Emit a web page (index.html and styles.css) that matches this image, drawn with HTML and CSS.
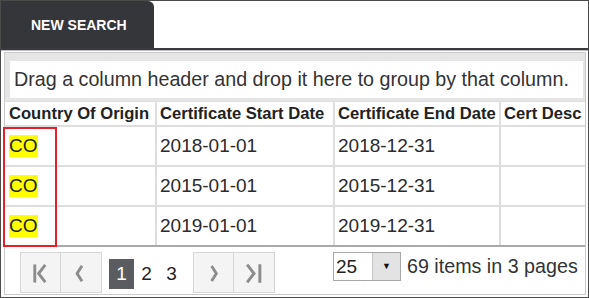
FILE: index.html
```html
<!DOCTYPE html>
<html lang="en">
<head>
    <meta charset="UTF-8">
    <title>Certificates</title>
    <link rel="stylesheet" href="styles.css">
</head>
<body>
    <div class="frame">
        <!-- Tab strip -->
        <div class="tabs">
            <div class="tab">NEW SEARCH</div>
        </div>
        <div class="tab-line"></div>

        <div class="content">
            <div class="grid">
                <div class="group-panel">
                    <div class="group-box">Drag a column header and drop it here to group by that column.</div>
                </div>

                <div class="row head">
                    <div class="cell first">Country Of Origin</div>
                    <div class="cell">Certificate Start Date</div>
                    <div class="cell">Certificate End Date</div>
                    <div class="cell last">Cert Desc</div>
                </div>
                <div class="row">
                    <div class="cell first"><span class="mark">CO</span></div>
                    <div class="cell">2018-01-01</div>
                    <div class="cell">2018-12-31</div>
                    <div class="cell last"></div>
                </div>
                <div class="row">
                    <div class="cell first"><span class="mark">CO</span></div>
                    <div class="cell">2015-01-01</div>
                    <div class="cell">2015-12-31</div>
                    <div class="cell last"></div>
                </div>
                <div class="row end">
                    <div class="cell first"><span class="mark">CO</span></div>
                    <div class="cell">2019-01-01</div>
                    <div class="cell">2019-12-31</div>
                    <div class="cell last"></div>
                </div>

                <!-- Pager -->
                <div class="pager">
                    <div class="nav-btns">
                        <button class="pg-btn">
                            <svg width="41" height="41" viewBox="0 0 41 41"><rect x="13" y="11" width="3" height="19" fill="#8c8c8c"/><polyline points="25.5,11.5 18.5,20.5 25.5,29.5" fill="none" stroke="#8c8c8c" stroke-width="3"/></svg>
                        </button>
                        <button class="pg-btn">
                            <svg width="41" height="41" viewBox="0 0 41 41"><polyline points="21.5,12.5 16.5,20.5 21.5,28.5" fill="none" stroke="#8c8c8c" stroke-width="3"/></svg>
                        </button>
                    </div>
                    <div class="pages">
                        <span class="page current">1</span>
                        <span class="page">2</span>
                        <span class="page">3</span>
                    </div>
                    <div class="nav-btns">
                        <button class="pg-btn">
                            <svg width="41" height="41" viewBox="0 0 41 41"><polyline points="18.5,12.5 23.5,20.5 18.5,28.5" fill="none" stroke="#8c8c8c" stroke-width="3"/></svg>
                        </button>
                        <button class="pg-btn">
                            <svg width="41" height="41" viewBox="0 0 41 41"><polyline points="13.5,11.5 20.5,20.5 13.5,29.5" fill="none" stroke="#8c8c8c" stroke-width="3"/><rect x="25" y="11" width="3" height="19" fill="#8c8c8c"/></svg>
                        </button>
                    </div>
                    <div class="size-select">
                        <span class="size-value">25</span>
                        <span class="size-arrow">&#9660;</span>
                    </div>
                    <span class="info">69 items in 3 pages</span>
                </div>
            </div>

            <!-- red highlight around the first column -->
            <div class="annot"></div>
        </div>
    </div>
</body>
</html>
```

FILE: styles.css
```css
/* Page */
body {
    margin: 0;
    background: #fff;
    font-family: "Liberation Sans", Arial, sans-serif;
    color: #333;
}

.frame {
    position: relative;
    width: 589px;
    height: 298px;
    border: 1px solid #4b4b4b;
    box-sizing: border-box;
    overflow: hidden;
}

/* Tabs */
.tabs {
    display: flex;
    height: 47px;
}

.tab {
    width: 153px;
    background-color: #35363a;
    border-top-right-radius: 6px;
    color: #fff;
    font-weight: bold;
    font-size: 14px;
    padding-left: 30px;
    line-height: 48px;
    box-sizing: border-box;
}

.tab-line {
    height: 2px;
    background-color: #3a3b3f;
    border-bottom: 1px solid #bdbdbd;
}

.content {
    padding: 1px 2px 0 3px;
}

/* Grid */
.grid {
    border: 1px solid #cacaca;
    height: 243px;
    box-sizing: border-box;
}

.group-panel {
    background-color: #e5e5e5;
    padding: 8px 2px 3px 5px;
}

.group-box {
    background-color: #fff;
    height: 37px;
    line-height: 37px;
    padding-left: 4px;
    font-size: 19.7px;
    color: #333;
    white-space: nowrap;
}

.row {
    display: grid;
    grid-template-columns: 152px 178px 166px 1fr;
    height: 40px;
    border-bottom: 2px solid #dedede;
    box-sizing: border-box;
}

.row.head {
    height: 26px;
    border-top: 1px solid #dedede;
}

.row.end {
    border-bottom-color: #a9a9a9;
}

.cell {
    border-right: 2px solid #dedede;
    padding-left: 3px;
    font-size: 19px;
    display: flex;
    align-items: center;
    white-space: nowrap;
    overflow: hidden;
    color: #2b2b2b;
}

.cell.first {
    padding-left: 4px;
}

.cell.last {
    border-right: none;
}

.head .cell {
    font-size: 16.6px;
    font-weight: bold;
    color: #222;
}

.mark {
    background-color: #ffff00;
    color: #222;
}

/* Pager */
.pager {
    display: flex;
    align-items: flex-start;
    padding: 5px 0 0 15px;
}

.nav-btns {
    display: flex;
}

.pg-btn {
    width: 41px;
    height: 41px;
    padding: 0;
    border: 1px solid #d6d6d6;
    background-color: #f4f4f4;
    display: flex;
}

.pg-btn + .pg-btn {
    border-left: none;
}

.pages {
    display: flex;
    margin: 7px 9px 0 7px;
}

.page {
    width: 25px;
    height: 30px;
    line-height: 30px;
    text-align: center;
    font-size: 19px;
    color: #222;
}

.page.current {
    background-color: #5b5c60;
    color: #fff;
}

.size-select {
    display: flex;
    margin-left: 58px;
    height: 29px;
    border: 1px solid #a8a8a8;
    box-sizing: border-box;
}

.size-value {
    width: 38px;
    font-size: 19px;
    line-height: 27px;
    padding-left: 2px;
    box-sizing: border-box;
    color: #222;
}

.size-arrow {
    width: 27px;
    background-color: #e3e3e3;
    border-left: 1px solid #c4c4c4;
    font-size: 9px;
    line-height: 27px;
    text-align: center;
    color: #111;
}

.info {
    margin-left: 6px;
    font-size: 19.7px;
    line-height: 29px;
    color: #333;
}

/* annotation box */
.annot {
    position: absolute;
    left: 2px;
    top: 126px;
    width: 54px;
    height: 120px;
    border: 2px solid #e3202b;
    box-sizing: border-box;
}
```
